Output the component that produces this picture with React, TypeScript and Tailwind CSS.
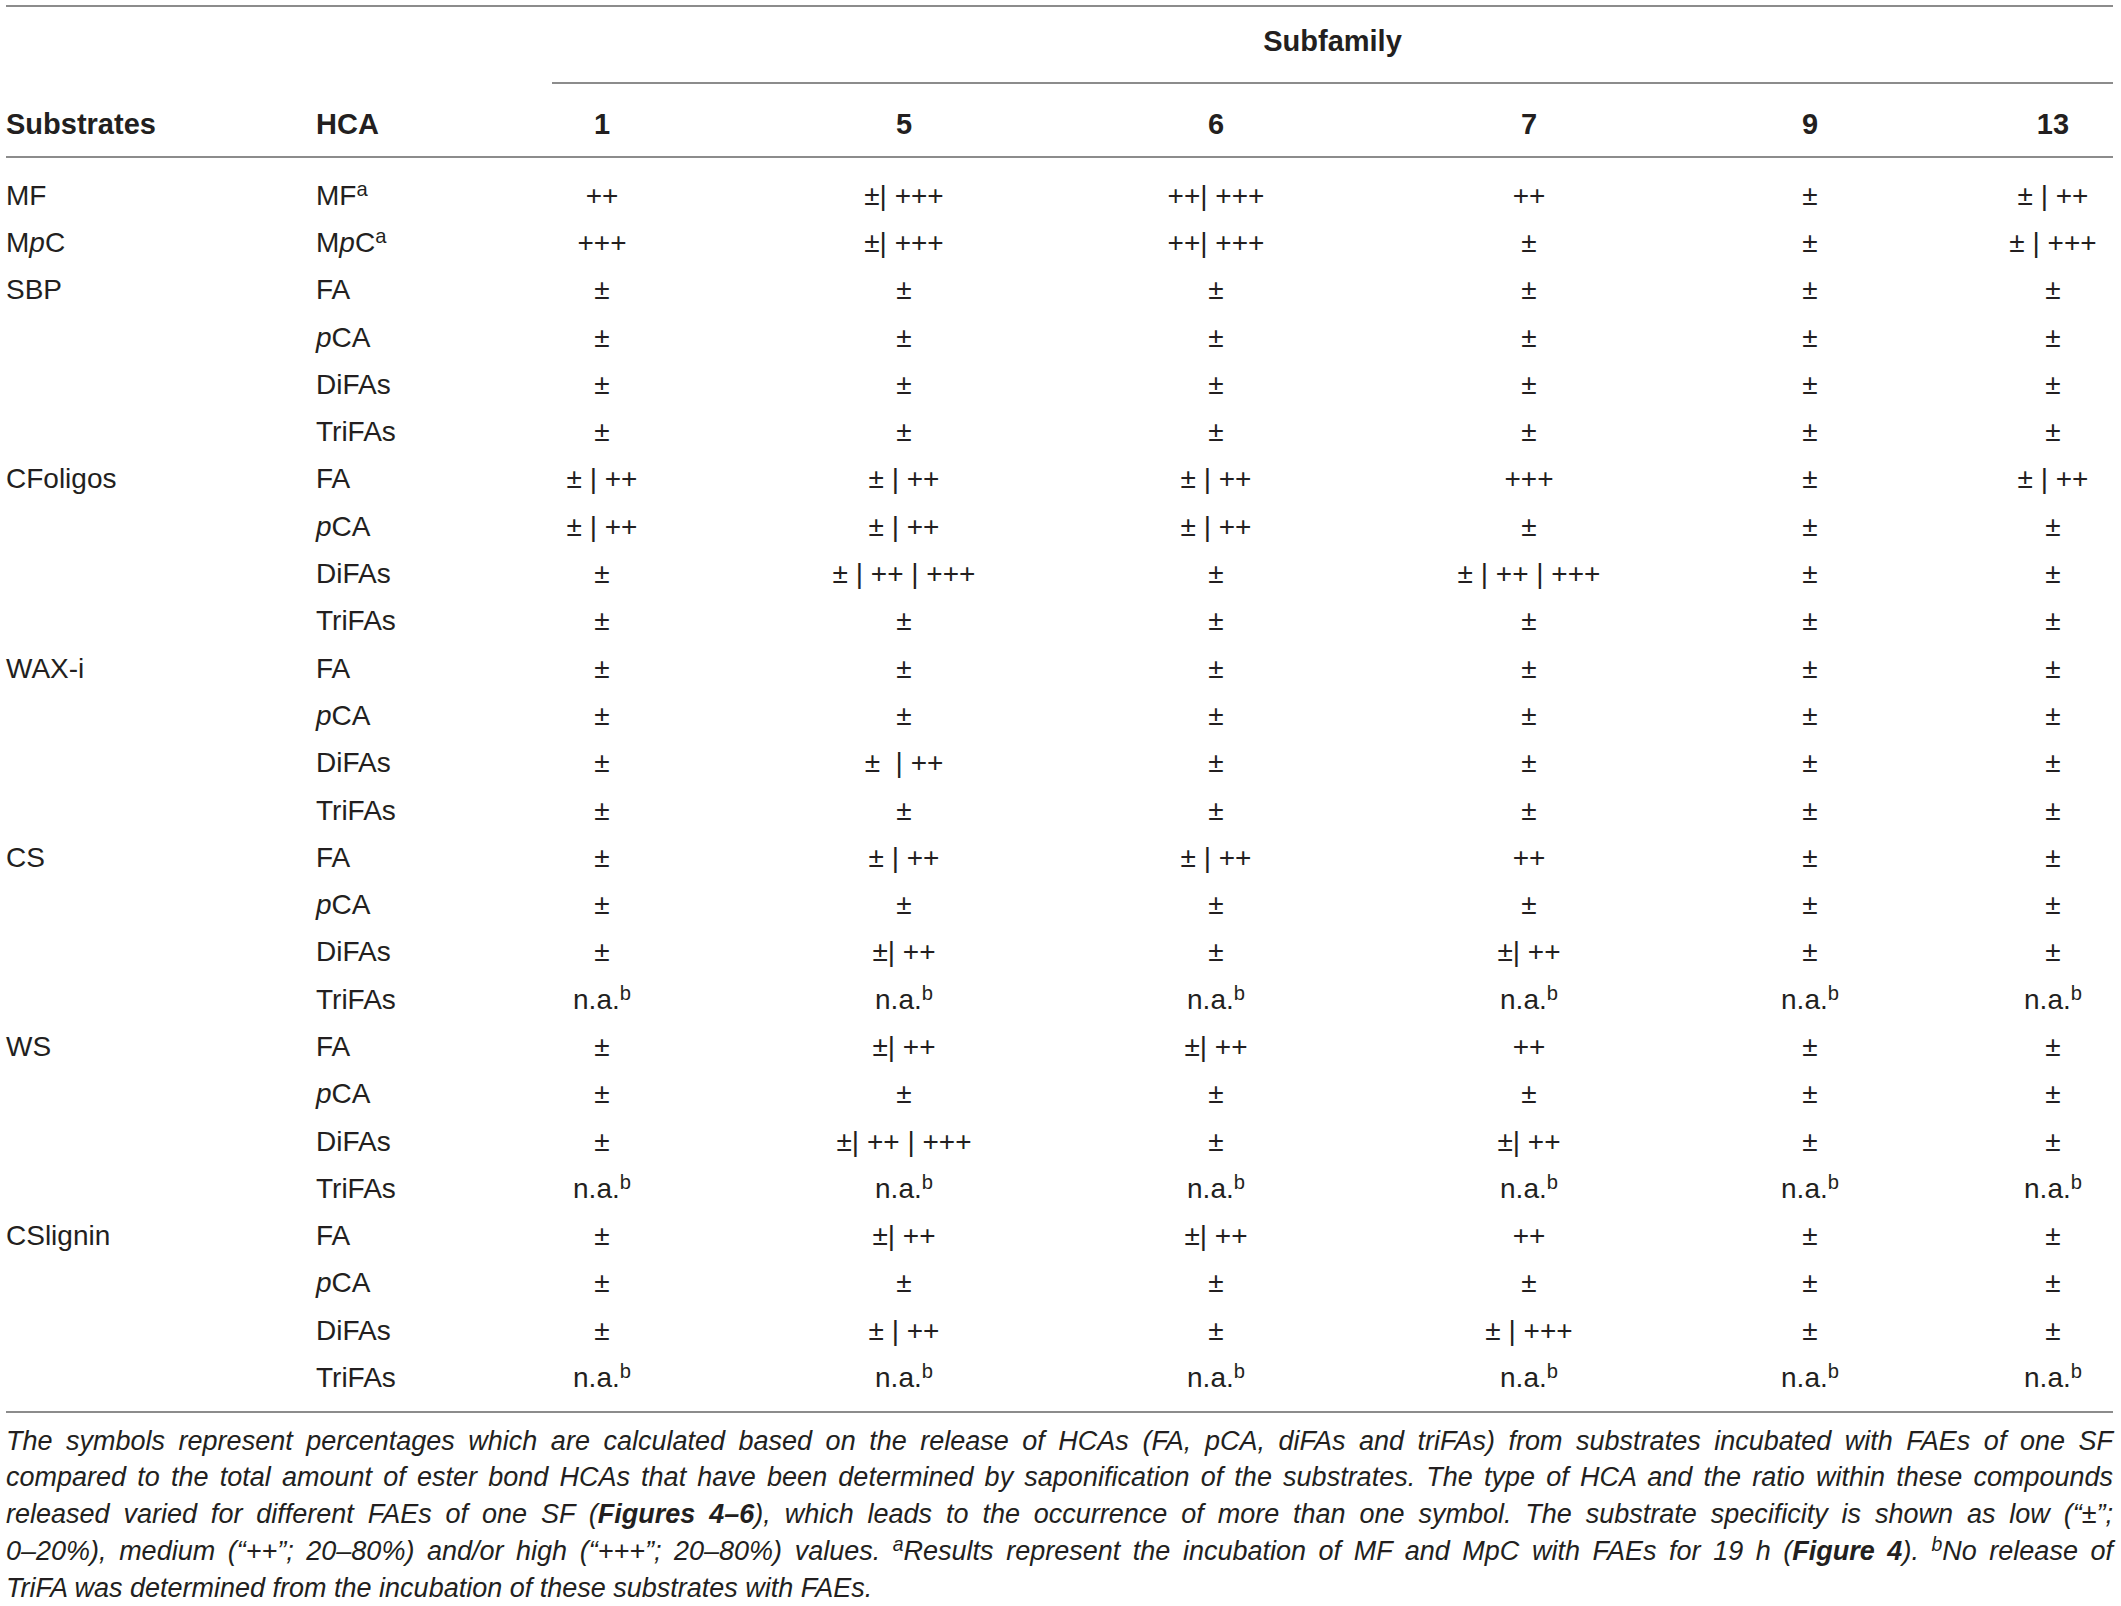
import React from "react"

type Row = {
  substrate?: React.ReactNode
  hca: React.ReactNode
  values: string[]
}

const P = () => <span className="italic">p</span>

const Sup = ({ children }: { children: React.ReactNode }) => (
  <span className="relative -top-[0.45em] text-[0.72em] leading-none">{children}</span>
)

const all = (v: string) => [v, v, v, v, v, v]
const NA = "n.a.b"

const FA = "FA"
const PCA = (
  <>
    <P />
    CA
  </>
)
const DIFAS = "DiFAs"
const TRIFAS = "TriFAs"

const rows: Row[] = [
  {
    substrate: "MF",
    hca: (
      <>
        MF<Sup>a</Sup>
      </>
    ),
    values: ["++", "±| +++", "++| +++", "++", "±", "± | ++"],
  },
  {
    substrate: (
      <>
        M<P />C
      </>
    ),
    hca: (
      <>
        M<P />C<Sup>a</Sup>
      </>
    ),
    values: ["+++", "±| +++", "++| +++", "±", "±", "± | +++"],
  },
  { substrate: "SBP", hca: FA, values: all("±") },
  { hca: PCA, values: all("±") },
  { hca: DIFAS, values: all("±") },
  { hca: TRIFAS, values: all("±") },
  { substrate: "CFoligos", hca: FA, values: ["± | ++", "± | ++", "± | ++", "+++", "±", "± | ++"] },
  { hca: PCA, values: ["± | ++", "± | ++", "± | ++", "±", "±", "±"] },
  { hca: DIFAS, values: ["±", "± | ++ | +++", "±", "± | ++ | +++", "±", "±"] },
  { hca: TRIFAS, values: all("±") },
  { substrate: "WAX-i", hca: FA, values: all("±") },
  { hca: PCA, values: all("±") },
  { hca: DIFAS, values: ["±", "±  | ++", "±", "±", "±", "±"] },
  { hca: TRIFAS, values: all("±") },
  { substrate: "CS", hca: FA, values: ["±", "± | ++", "± | ++", "++", "±", "±"] },
  { hca: PCA, values: all("±") },
  { hca: DIFAS, values: ["±", "±| ++", "±", "±| ++", "±", "±"] },
  { hca: TRIFAS, values: all(NA) },
  { substrate: "WS", hca: FA, values: ["±", "±| ++", "±| ++", "++", "±", "±"] },
  { hca: PCA, values: all("±") },
  { hca: DIFAS, values: ["±", "±| ++ | +++", "±", "±| ++", "±", "±"] },
  { hca: TRIFAS, values: all(NA) },
  { substrate: "CSlignin", hca: FA, values: ["±", "±| ++", "±| ++", "++", "±", "±"] },
  { hca: PCA, values: all("±") },
  { hca: DIFAS, values: ["±", "± | ++", "±", "± | +++", "±", "±"] },
  { hca: TRIFAS, values: all(NA) },
]

const subfamilies = ["1", "5", "6", "7", "9", "13"]

const Value = ({ v }: { v: string }) =>
  v === NA ? (
    <>
      n.a.<Sup>b</Sup>
    </>
  ) : (
    <>{v}</>
  )

const grid = "grid grid-cols-[310px_81px_410px_194px_430px_196px_366px_120px]"

export default function App() {
  return (
    <div className="min-h-screen bg-white font-['Liberation_Sans',Arial,sans-serif] text-[#231f20]">
      <div className="ml-[6px] w-[2107px] pt-[5px]">
        {/* table */}
        <div className="border-t-2 border-[#8c8c8c]">
          <div className="pt-[17px]">
            <div className="ml-[546px] border-b-2 border-[#8c8c8c] pb-[24px] text-center text-[29px] font-bold leading-[34px]">
              Subfamily
            </div>
          </div>
          <div className={`${grid} border-b-2 border-[#8c8c8c] pt-[23px] pb-[15px] text-[29px] font-bold leading-[34px]`}>
            <div>Substrates</div>
            <div className="whitespace-nowrap">HCA</div>
            {subfamilies.map((s) => (
              <div key={s} className="text-center">
                {s}
              </div>
            ))}
          </div>
          <div className="pt-[14px] pb-[9px]">
            {rows.map((r, i) => (
              <div key={i} className={`${grid} h-[47.3px] items-center text-[28px] leading-[34px] whitespace-nowrap`}>
                <div>{r.substrate}</div>
                <div>{r.hca}</div>
                {r.values.map((v, j) => (
                  <div key={j} className="text-center whitespace-pre">
                    <Value v={v} />
                  </div>
                ))}
              </div>
            ))}
          </div>
        </div>

        {/* footnote */}
        <div className="border-t-2 border-[#8c8c8c] pt-[10px] text-[27px] italic leading-[36.7px]">
          <div className="text-justify [text-align-last:justify]">
            The symbols represent percentages which are calculated based on the release of HCAs (FA, pCA, diFAs and triFAs) from substrates incubated with FAEs of one SF
          </div>
          <div className="text-justify [text-align-last:justify]">
            compared to the total amount of ester bond HCAs that have been determined by saponification of the substrates. The type of HCA and the ratio within these compounds
          </div>
          <div className="text-justify [text-align-last:justify]">
            released varied for different FAEs of one SF (<span className="font-bold">Figures 4–6</span>), which leads to the occurrence of more than one symbol. The substrate specificity is shown as low (“±”;
          </div>
          <div className="text-justify [text-align-last:justify]">
            0–20%), medium (“++”; 20–80%) and/or high (“+++”; 20–80%) values. <Sup>a</Sup>Results represent the incubation of MF and MpC with FAEs for 19 h (
            <span className="font-bold">Figure 4</span>). <Sup>b</Sup>No release of
          </div>
          <div>TriFA was determined from the incubation of these substrates with FAEs.</div>
        </div>
      </div>
    </div>
  )
}
